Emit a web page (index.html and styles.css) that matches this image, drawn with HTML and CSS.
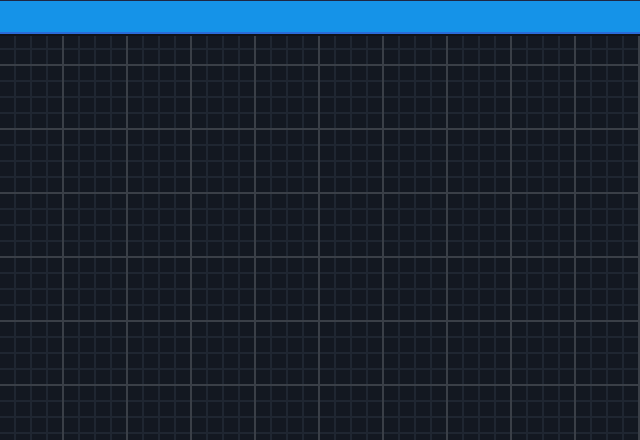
FILE: index.html
```html
<!DOCTYPE html>
<html>
<head>
<meta charset="utf-8">
<link rel="stylesheet" href="styles.css">
</head>
<body>
<div class="app">
  <header class="topbar"></header>
  <main class="canvas"></main>
</div>
</body>
</html>
```

FILE: styles.css
```css
html, body {
  margin: 0;
  padding: 0;
  width: 640px;
  height: 440px;
  overflow: hidden;
  background: #131821;
  font-family: "Liberation Sans", Arial, sans-serif;
}
.app {
  display: flex;
  flex-direction: column;
  width: 640px;
  height: 440px;
  background-color: #131821;
  background-image:
    linear-gradient(to right, transparent 62px, #3a3f47 62px, #3a3f47 64px, transparent 64px),
    linear-gradient(to bottom, #3a3f47 0, #3a3f47 2px, transparent 2px),
    linear-gradient(to right, transparent 14px, #1f2631 14px, #1f2631 16px, transparent 16px),
    linear-gradient(to bottom, #1f2631 0, #1f2631 2px, transparent 2px);
  background-size: 64px 64px, 64px 64px, 16px 16px, 16px 16px;
  background-position: 0 0, 0 0, 0 0, 0 0;
}
.topbar {
  flex: none;
  height: 31px;
  background: #1593e8;
  border-top: 1px solid #1e2744;
  border-bottom: 2px solid #2a6bd8;
  box-shadow: 0 2px 0 #0f1217;
}
.canvas {
  flex: 1;
}
```
